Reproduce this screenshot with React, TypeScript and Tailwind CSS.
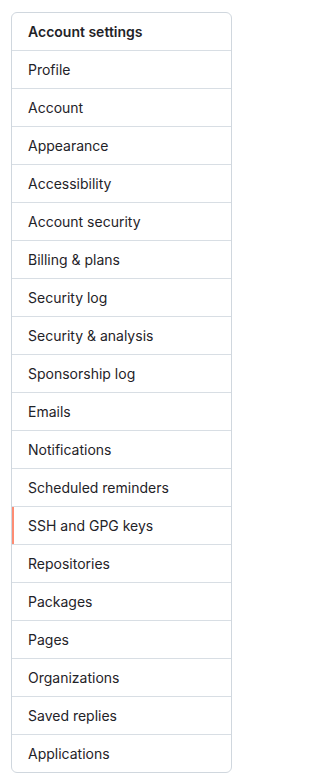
const items = [
  "Profile",
  "Account",
  "Appearance",
  "Accessibility",
  "Account security",
  "Billing & plans",
  "Security log",
  "Security & analysis",
  "Sponsorship log",
  "Emails",
  "Notifications",
  "Scheduled reminders",
  "SSH and GPG keys",
  "Repositories",
  "Packages",
  "Pages",
  "Organizations",
  "Saved replies",
  "Applications",
];

const active = "SSH and GPG keys";

export default function App() {
  return (
    <div className="bg-white min-h-screen pt-[12px] pl-[11px] font-['Inter',sans-serif] text-[14px] text-[#1f2328]">
      <nav className="w-[221px] border border-[#d0d7de] rounded-md overflow-hidden">
        <h3 className="h-[37px] flex items-center px-4 font-semibold leading-5">
          Account settings
        </h3>
        {items.map((item) => (
          <a
            key={item}
            href="#"
            className={
              "relative h-[38px] flex items-center px-4 border-t border-[#d8dee4] leading-5" +
              (item === active ? " bg-white" : "")
            }
          >
            {item === active && (
              <span className="absolute left-0 top-0 bottom-0 w-[2px] bg-[#fd8c73]" />
            )}
            {item}
          </a>
        ))}
      </nav>
    </div>
  );
}
